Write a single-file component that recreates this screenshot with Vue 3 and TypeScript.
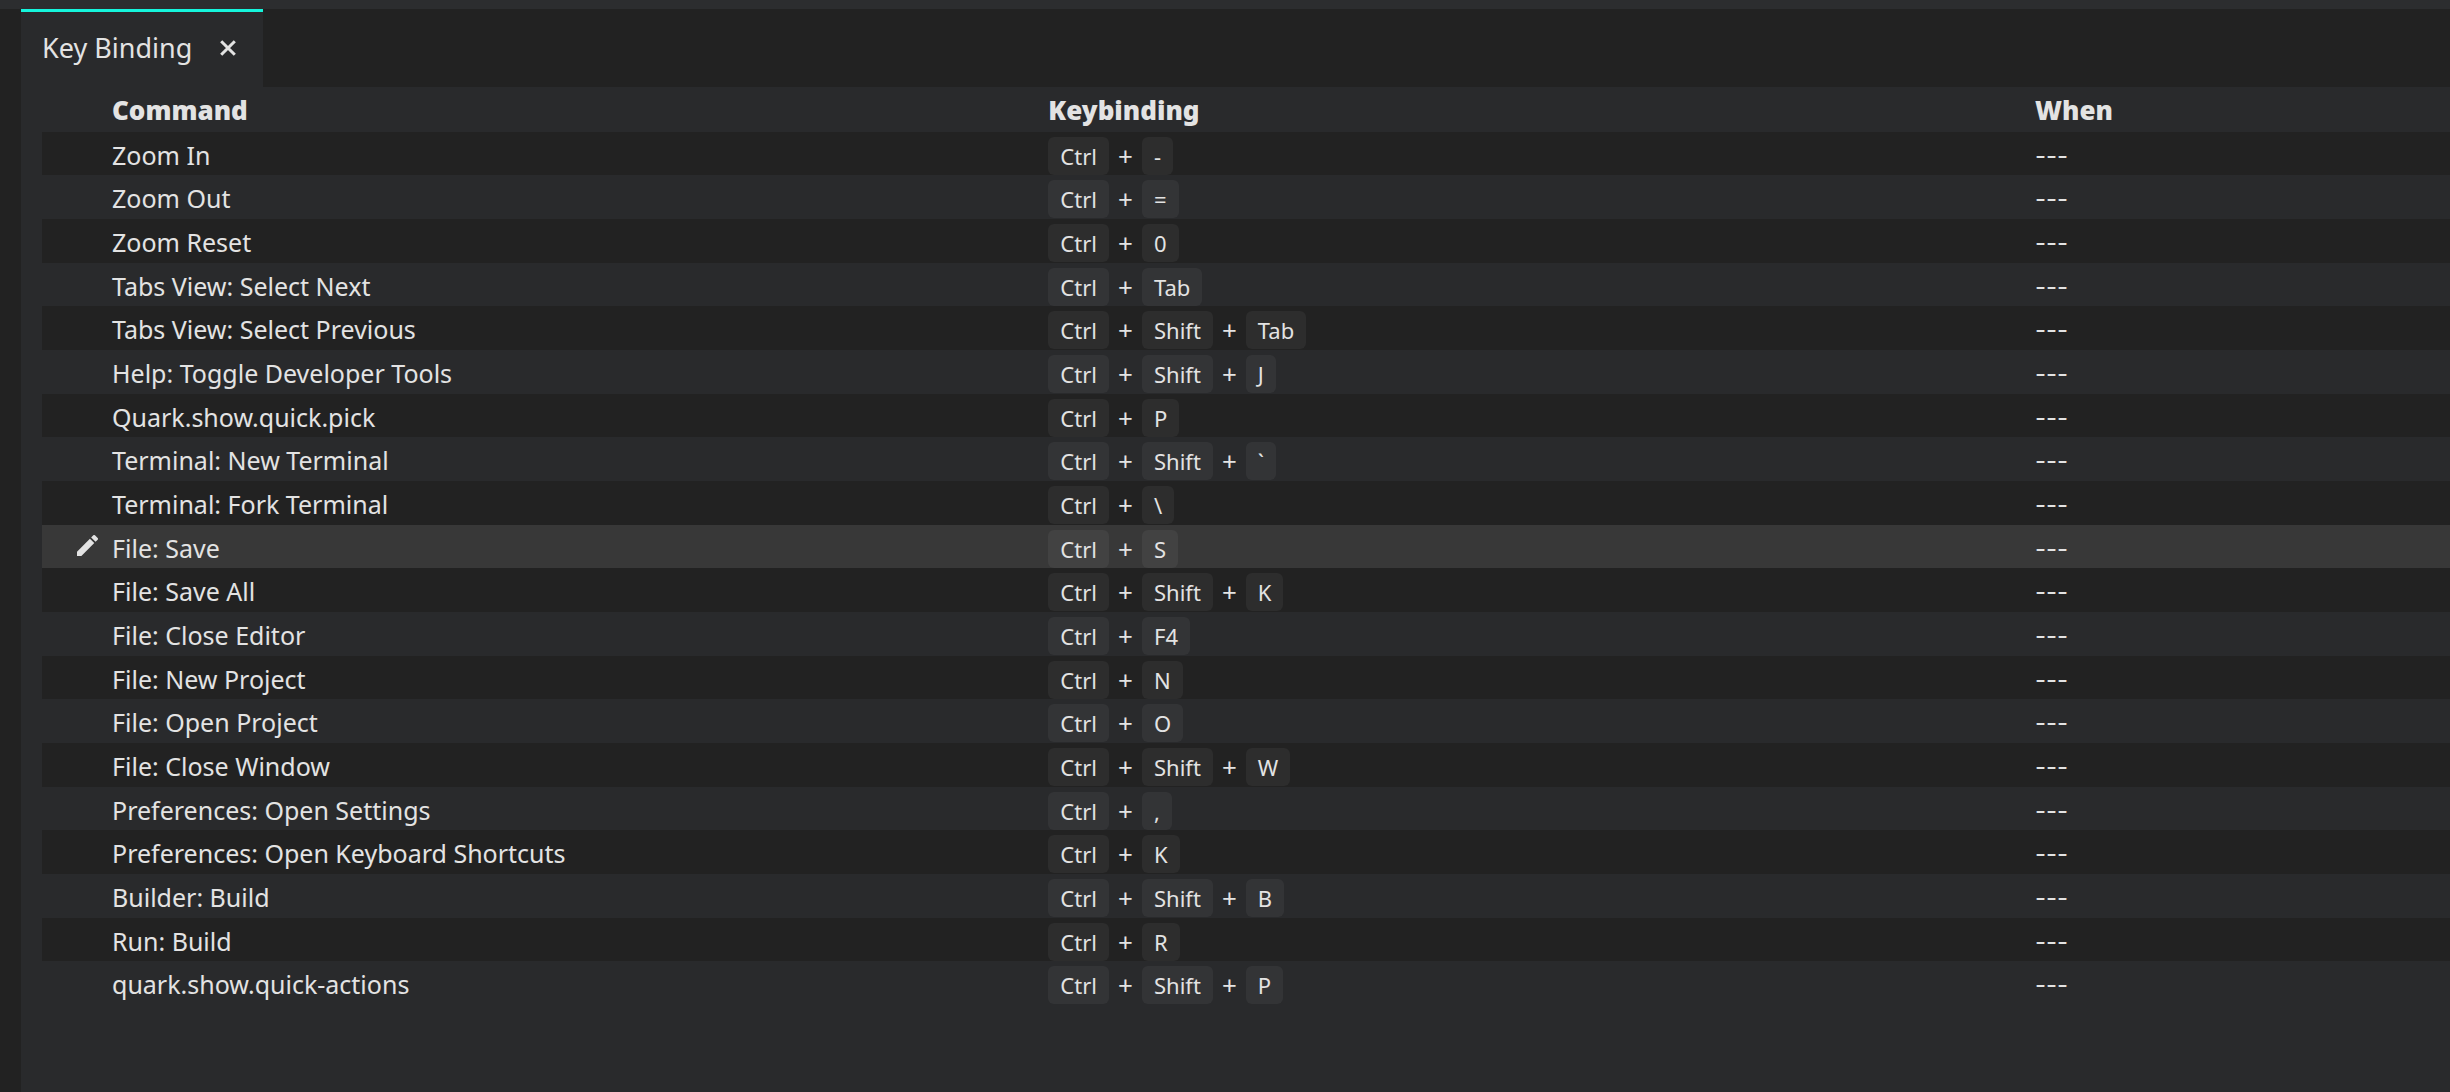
<script setup lang="ts">
import { ref } from 'vue'

interface Binding {
  command: string
  keys: string[]
}

const bindings: Binding[] = [
  { command: 'Zoom In', keys: ['Ctrl', '-'] },
  { command: 'Zoom Out', keys: ['Ctrl', '='] },
  { command: 'Zoom Reset', keys: ['Ctrl', '0'] },
  { command: 'Tabs View: Select Next', keys: ['Ctrl', 'Tab'] },
  { command: 'Tabs View: Select Previous', keys: ['Ctrl', 'Shift', 'Tab'] },
  { command: 'Help: Toggle Developer Tools', keys: ['Ctrl', 'Shift', 'J'] },
  { command: 'Quark.show.quick.pick', keys: ['Ctrl', 'P'] },
  { command: 'Terminal: New Terminal', keys: ['Ctrl', 'Shift', '`'] },
  { command: 'Terminal: Fork Terminal', keys: ['Ctrl', '\\'] },
  { command: 'File: Save', keys: ['Ctrl', 'S'] },
  { command: 'File: Save All', keys: ['Ctrl', 'Shift', 'K'] },
  { command: 'File: Close Editor', keys: ['Ctrl', 'F4'] },
  { command: 'File: New Project', keys: ['Ctrl', 'N'] },
  { command: 'File: Open Project', keys: ['Ctrl', 'O'] },
  { command: 'File: Close Window', keys: ['Ctrl', 'Shift', 'W'] },
  { command: 'Preferences: Open Settings', keys: ['Ctrl', ','] },
  { command: 'Preferences: Open Keyboard Shortcuts', keys: ['Ctrl', 'K'] },
  { command: 'Builder: Build', keys: ['Ctrl', 'Shift', 'B'] },
  { command: 'Run: Build', keys: ['Ctrl', 'R'] },
  { command: 'quark.show.quick-actions', keys: ['Ctrl', 'Shift', 'P'] },
]

const active = ref(9)
</script>

<template>
  <div class="editor">
    <header class="tabs" role="tablist">
      <div class="tab" role="tab" aria-selected="true">
        <span class="tab-title">Key Binding</span>
        <button class="close" type="button" aria-label="Close">
          <svg viewBox="0 0 16 16" width="16" height="16" aria-hidden="true">
            <path d="M1.2 1.2 14.8 14.8M14.8 1.2 1.2 14.8" fill="none" stroke="currentColor" stroke-width="3" />
          </svg>
        </button>
      </div>
    </header>
    <main class="panel">
      <table class="bindings">
        <thead>
          <tr>
            <td></td>
            <th scope="col">Command</th>
            <th scope="col">Keybinding</th>
            <th scope="col">When</th>
          </tr>
        </thead>
        <tbody>
          <tr
            v-for="(item, index) in bindings"
            :key="item.command"
            :class="{ active: index === active }"
            @mouseenter="active = index"
          >
            <td class="action">
              <button v-if="index === active" class="edit" type="button" aria-label="Edit keybinding">
                <svg viewBox="3 3 18 18" width="21" height="21" aria-hidden="true">
                  <path
                    fill="currentColor"
                    d="M3 17.25V21h3.75L17.81 9.94l-3.75-3.75L3 17.25zM20.71 7.04a1 1 0 0 0 0-1.41l-2.34-2.34a1 1 0 0 0-1.41 0l-1.83 1.83 3.75 3.75 1.83-1.83z"
                  />
                </svg>
              </button>
            </td>
            <td>{{ item.command }}</td>
            <td class="keys">
              <template v-for="(key, k) in item.keys" :key="key">
                <span v-if="k > 0" class="plus">+</span>
                <kbd>{{ key }}</kbd>
              </template>
            </td>
            <td class="when">---</td>
          </tr>
        </tbody>
      </table>
    </main>
  </div>
</template>

<style>
body {
  background: #222222;
}
</style>

<style scoped>
.editor {
  box-sizing: border-box;
  display: flex;
  flex-direction: column;
  min-height: 100vh;
  padding-left: 21px;
  border-top: 9px solid #2c2d2f;
  background: #222222;
  color: #e3e3e3;
  font-family: 'Noto Sans', 'Open Sans', sans-serif;
  font-size: 25px;
}

.tabs {
  display: flex;
}

.tab {
  box-sizing: border-box;
  display: flex;
  align-items: center;
  gap: 28px;
  height: 78px;
  padding: 0 27px 3px 21px;
  border-top: 3px solid #15f5dc;
  background: #292a2c;
}

.tab-title {
  font-size: 27px;
  line-height: 36px;
}

button {
  display: flex;
  padding: 0;
  border: 0;
  background: none;
  color: inherit;
}

.panel {
  flex: 1;
  padding-left: 21px;
  background: #292a2c;
}

.bindings {
  display: block;
}

thead,
tbody {
  display: block;
}

tr {
  display: grid;
  grid-template-columns: 70px 801fr 844fr 355fr;
  align-items: center;
  height: 44px;
}

thead tr {
  height: 45px;
}

tbody tr:nth-child(3n + 1) {
  height: 43px;
}

tbody tr:nth-child(odd) {
  background: #222222;
}

tbody tr:nth-child(n).active {
  background: #383838;
}

th,
td {
  padding: 1px 0 0;
  line-height: 42px;
  text-align: left;
  white-space: nowrap;
}

th {
  font-size: 26px;
  font-weight: 900;
}

.action {
  display: flex;
  justify-content: flex-end;
  padding: 0 14px 5px 0;
}

.keys {
  display: flex;
  align-items: center;
  padding-top: 3px;
  font-size: 22px;
}

.when {
  padding-top: 3px;
  font-family: Inter, 'Noto Sans', sans-serif;
  font-size: 24px;
}

kbd {
  padding: 0 12px;
  border-radius: 6px;
  background: rgb(255 255 255 / 5%);
  font-family: inherit;
  line-height: 38px;
}

.plus {
  width: 33px;
  font-size: 26px;
  line-height: 38px;
  text-align: center;
}
</style>
